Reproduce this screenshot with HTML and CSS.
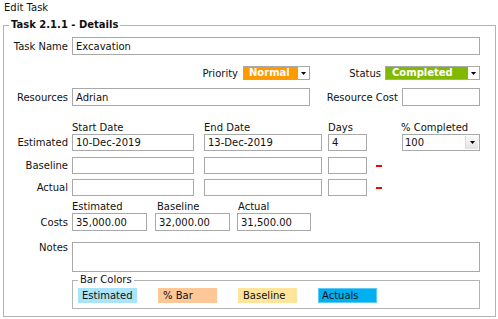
FILE: index.html
```html
<!DOCTYPE HTML>
<html>
	<head>
		<meta charset="utf-8">
		<title>Edit Task</title>
		<link rel="stylesheet" href="styles.css">
	</head>
	<body>
		<div class="title">Edit Task</div>
		<fieldset class="details">
			<legend>Task 2.1.1 - Details</legend>

			<div class="row r-name">
				<span class="lbl">Task Name</span>
				<input class="in grow" type="text" value="Excavation">
			</div>

			<div class="row r-state">
				<span class="lbl"></span>
				<span class="pri-lbl">Priority</span>
				<div class="select pri">
					<span class="val">Normal</span>
					<span class="arrow"><svg width="5" height="3" viewBox="0 0 5 3"><polygon points="0,0 5,0 2.5,3" fill="#000"/></svg></span>
				</div>
				<span class="st-lbl">Status</span>
				<div class="select st">
					<span class="val">Completed</span>
					<span class="arrow"><svg width="5" height="3" viewBox="0 0 5 3"><polygon points="0,0 5,0 2.5,3" fill="#000"/></svg></span>
				</div>
			</div>

			<div class="row r-res">
				<span class="lbl">Resources</span>
				<input class="in w-res" type="text" value="Adrian">
				<span class="rc-lbl">Resource Cost</span>
				<input class="in w-rc" type="text" value="">
			</div>

			<div class="row r-head">
				<span class="lbl"></span>
				<span class="c-start">Start Date</span>
				<span class="c-end">End Date</span>
				<span class="c-days">Days</span>
				<span class="c-dash"></span>
				<span class="c-pct">% Completed</span>
			</div>

			<div class="row r-date">
				<span class="lbl">Estimated</span>
				<input class="in c-start" type="text" value="10-Dec-2019">
				<input class="in c-end" type="text" value="13-Dec-2019">
				<input class="in c-days" type="text" value="4">
				<span class="c-dash"></span>
				<div class="select pct c-pct">
					<span class="val">100</span>
					<span class="arrow"><svg width="5" height="3" viewBox="0 0 5 3"><polygon points="0,0 5,0 2.5,3" fill="#000"/></svg></span>
				</div>
			</div>

			<div class="row r-date r-base">
				<span class="lbl">Baseline</span>
				<input class="in c-start" type="text" value="">
				<input class="in c-end" type="text" value="">
				<input class="in c-days" type="text" value="">
				<span class="c-dash"><i class="dash"></i></span>
			</div>

			<div class="row r-date r-act">
				<span class="lbl">Actual</span>
				<input class="in c-start" type="text" value="">
				<input class="in c-end" type="text" value="">
				<input class="in c-days" type="text" value="">
				<span class="c-dash"><i class="dash"></i></span>
			</div>

			<div class="row r-chead">
				<span class="lbl"></span>
				<span class="k-est">Estimated</span>
				<span class="k-base">Baseline</span>
				<span class="k-act">Actual</span>
			</div>

			<div class="row r-cost">
				<span class="lbl">Costs</span>
				<input class="in k-est" type="text" value="35,000.00">
				<input class="in k-base" type="text" value="32,000.00">
				<input class="in k-act" type="text" value="31,500.00">
			</div>

			<div class="row r-notes">
				<span class="lbl">Notes</span>
				<textarea class="in notes"></textarea>
			</div>

			<fieldset class="bars">
				<legend>Bar Colors</legend>
				<div class="swatches">
					<span class="sw sw-est">Estimated</span>
					<span class="sw sw-pct">% Bar</span>
					<span class="sw sw-base">Baseline</span>
					<span class="sw sw-act">Actuals</span>
				</div>
			</fieldset>
		</fieldset>
	</body>
</html>
```

FILE: styles.css
```css
body {
	margin: 0;
	background: #fff;
	color: #111;
	font-family: "DejaVu Sans", sans-serif;
	font-size: 10px;
}
.title {
	height: 19px;
	line-height: 15px;
	padding-left: 4px;
}
fieldset {
	border: 1px solid #b4b4b4;
	min-width: 0;
}
legend {
	line-height: 12px;
	padding: 0 2px;
}
.details {
	margin: 0 2px 0 3px;
	padding: 0 15px 7px 0;
}
.details > legend {
	margin-left: 5px;
	font-weight: bold;
}
.row {
	display: flex;
	align-items: center;
}
.lbl {
	width: 64px;
	margin-right: 4px;
	text-align: right;
	flex: none;
}
.in {
	box-sizing: border-box;
	height: 18px;
	border: 1px solid #a9a9a9;
	padding: 0 3px;
	margin: 0;
	font: inherit;
	color: #111;
	background: #fff;
	outline: none;
	flex: none;
}
.grow {
	flex: 1;
}

.r-name {
	margin-top: 6px;
}

/* priority / status */
.r-state {
	margin-top: 11px;
	height: 14px;
}
.pri-lbl {
	width: 166px;
	margin-right: 5px;
	text-align: right;
}
.st-lbl {
	width: 71px;
	margin-right: 4px;
	text-align: right;
}
.select {
	box-sizing: border-box;
	display: flex;
	height: 14px;
	border: 1px solid #a9a9a9;
	background: #fff;
	flex: none;
}
.select .val {
	flex: 1;
	line-height: 12px;
	padding-left: 5px;
	color: #fff;
	font-weight: bold;
}
.select .arrow {
	width: 11px;
	display: flex;
	align-items: center;
	justify-content: center;
}
.select .arrow svg {
	display: block;
}
.pri {
	width: 67px;
}
.pri .val {
	background: #ff9900;
}
.st {
	width: 95px;
}
.st .val {
	background: #80b900;
	padding-left: 6px;
}
.pct {
	height: 17px;
}
.pct .val {
	color: #111;
	font-weight: normal;
	line-height: 15px;
	padding-left: 2px;
}
.pct .arrow {
	width: 12px;
	margin: 1px 1px 1px 0;
	background: linear-gradient(#fbfbfb, #e2e2e2);
	border-left: 1px solid #dcdcdc;
}

/* resources */
.r-res {
	margin-top: 8px;
}
.w-res {
	width: 238px;
}
.rc-lbl {
	width: 88px;
	margin-right: 4px;
	text-align: right;
}
.w-rc {
	width: 78px;
}

/* dates */
.r-head {
	margin-top: 15px;
	height: 13px;
	line-height: 13px;
}
.c-start {
	width: 122px;
	flex: none;
}
.c-end {
	width: 118px;
	margin-left: 10px;
	flex: none;
}
.c-days {
	width: 39px;
	margin-left: 6px;
	flex: none;
}
.c-dash {
	width: 6px;
	margin-left: 9px;
	flex: none;
	display: flex;
}
.c-pct {
	width: 78px;
	margin-left: 20px;
	flex: none;
}
.r-head .c-pct {
	margin-left: 19px;
	width: 79px;
}
.r-date .in {
	height: 17px;
}
.r-base {
	margin-top: 6px;
}
.r-act {
	margin-top: 5px;
}
.dash {
	display: block;
	width: 6px;
	height: 2px;
	background: #f00;
}

/* costs */
.r-chead {
	margin-top: 4px;
	height: 13px;
	line-height: 13px;
}
.k-est {
	width: 75px;
	flex: none;
}
.k-base {
	width: 75px;
	margin-left: 8px;
	flex: none;
}
.k-act {
	width: 74px;
	margin-left: 7px;
	flex: none;
}
.r-chead .k-base {
	padding-left: 2px;
	box-sizing: border-box;
}
.r-chead .k-act {
	padding-left: 1px;
	box-sizing: border-box;
}

/* notes */
.r-notes {
	margin-top: 11px;
	align-items: flex-start;
}
.r-notes .lbl {
	line-height: 12px;
}
.notes {
	flex: 1;
	height: 30px;
	resize: none;
	display: block;
}

/* bar colours */
.bars {
	margin: 2px 0 0 68px;
	padding: 0 0 5px 5px;
}
.swatches {
	display: flex;
	gap: 21px;
	margin-top: 2px;
}
.sw {
	box-sizing: border-box;
	width: 59px;
	height: 15px;
	line-height: 15px;
	padding-left: 4px;
}
.sw-est {
	background: #a9e4fa;
}
.sw-pct {
	background: #fdc797;
	padding-left: 5px;
}
.sw-base {
	background: #fee59b;
	padding-left: 5px;
}
.sw-act {
	background: #00b0f0;
	border: 1px solid #5ccaf5;
	line-height: 13px;
	padding-left: 3px;
}
```
